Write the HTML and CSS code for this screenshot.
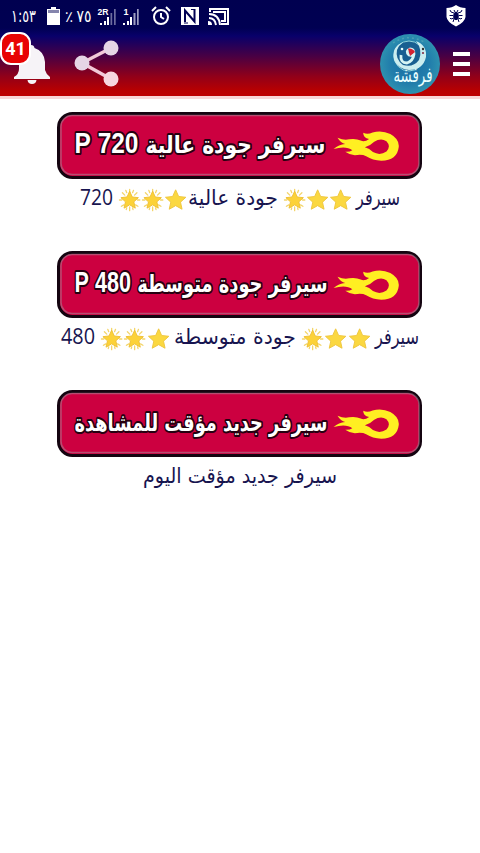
FILE: index.html
```
<!DOCTYPE html>
<html lang="ar">
<head>
    <meta charset="UTF-8">
    <meta name="viewport" content="width=device-width, initial-scale=1.0">
    <title>فرفشة</title>
    <link rel="stylesheet" href="styles.css">
</head>
<body>
    <svg class="defs" width="0" height="0">
        <symbol id="flame" viewBox="276 74 208 98">
            <path fill-rule="evenodd" d="M278 132 Q294 119 314 117 Q300 113 290 97 Q310 106 326 102 Q348 99 362 106 Q374 112 388 101 Q369 98 370 82 Q383 88 399 81 Q428 73 454 86 Q483 102 480 127 Q475 168 426 169 Q399 168 379 155 Q366 148 344 152 Q326 150 314 141 Q328 142 336 136 Q317 121 278 132 Z M375 127 Q391 123 404 110 Q424 97 442 108 Q457 124 442 140 Q422 154 400 142 Q389 131 375 127 Z"/>
        </symbol>
        <symbol id="star" viewBox="0 0 24 24">
            <path d="M12 1.5 L15.1 8.4 L22.5 9.2 L17 14.2 L18.6 21.5 L12 17.8 L5.4 21.5 L7 14.2 L1.5 9.2 L8.9 8.4 Z" fill="#fbd840" stroke="#eec640" stroke-width="1" stroke-linejoin="round"/>
        </symbol>
        <symbol id="glow" viewBox="0 0 24 24">
            <path d="M12 1V5M12 19V23M1.5 12H4M20 12H22.5M4.5 4.5L7 7M19.5 4.5L17 7M3.5 18.5L6 17M20.5 18.5L18 17M8 2L9 4.5M16 2L15 4.5M8.5 22L9 20M15.5 22L15 20" stroke="#f3d56a" stroke-width="1.3" stroke-linecap="round"/>
            <path d="M12 3 L14.7 8.9 L21 9.6 L16.3 13.9 L17.8 20.4 L12 17 L6.2 20.4 L7.7 13.9 L3 9.6 L9.3 8.9 Z" fill="#fcd238" stroke="#eec035" stroke-width="1" stroke-linejoin="round"/>
        </symbol>
    </svg>

    <div class="header">
        <div class="status">
            <svg class="clock" width="27" height="26"><text x="13.5" y="19" textLength="25" lengthAdjust="spacingAndGlyphs">١:٥٣</text></svg>
            <svg class="battery" width="13" height="18"><path fill="#fff" d="M4 0H9V2H13V18H0V2H4Z"/><path fill="#8585ad" d="M1 3H12V6H1Z"/></svg>
            <svg class="percent" width="27" height="26"><text x="4" y="19" class="sign">٪</text><text x="19" y="19" textLength="15" lengthAdjust="spacingAndGlyphs">٧٥</text></svg>
            <svg class="signal" width="18" height="19">
                <text x="5" y="8" class="sim" textLength="11" lengthAdjust="spacingAndGlyphs">2R</text>
                <path fill="#fff" d="M2 16h2v2h-2zM6 14h2v4h-2zM9 10h2v8h-2z"/><path fill="#6c6c9e" d="M12.5 6h1.7v12h-1.7zM16 2h1.7v16h-1.7z"/>
            </svg>
            <svg class="signal signal-two" width="16" height="19">
                <text x="3" y="8" class="sim">1</text>
                <path fill="#fff" d="M0 16h2v2h-2zM4 14h2v4h-2zM7 10h2v8h-2z"/><path fill="#9d9dc0" d="M10.5 6h2v12h-2zM14 2h1.7v16h-1.7z"/>
            </svg>
            <svg class="alarm" width="20" height="20" viewBox="0 0 20 20" fill="none" stroke="#fff" stroke-width="2"><circle cx="10" cy="11" r="7"/><path d="M10 7V11L13 13M1 5L5 1M19 5L15 1"/></svg>
            <svg class="nfc" width="18" height="18"><path fill="#fff" d="M0 0H18V18H0Z"/><path d="M4 15V3.5L13.5 14.5V3" fill="none" stroke="#000052" stroke-width="2"/><path d="M7 16H3M14.5 2.5H10" stroke="#000052" stroke-width="1.2"/></svg>
            <svg class="cast" width="22" height="19" viewBox="0 0 22 19" fill="none" stroke="#fff" stroke-width="2"><path d="M2 5V2H20V17H13M5 5H17V14H13M1 7Q11 7 12 18M1 11Q7 11 8 18"/><path fill="#fff" stroke="none" d="M0 14Q4 14 4 18H0Z"/></svg>
            <svg class="shield" width="20" height="22" viewBox="0 0 20 22">
                <path fill="#fff" d="M10 0Q14 3 19.5 3V12Q19 17 10 21.5Q1 17 .5 12V3Q6 3 10 0Z"/>
                <g stroke="#000052" fill="none" stroke-width="1"><ellipse cx="10" cy="11" rx="2.3" ry="3.8" fill="#000052"/><path d="M8 8L5 7L4 5M12 8L15 7L16 5M7 10.5H3.5M13 10.5H16.5M8 13L5 14L4 13M12 13L15 14L16 13M8 14L7 17M12 14L13 17M9 7L8 5M11 7L12 5"/></g>
            </svg>
        </div>
        <div class="toolbar">
            <div class="notify">
                <svg class="bell" width="36" height="42" viewBox="0 0 36 42"><path fill="#f6f3f7" d="M17 2Q20 2 20.5 5Q30 8 31 19V27Q32 31 36 34V36H0V34Q5 31 5 26V18Q6 8 14 5Q14 2 17 2ZM13.5 37H22.5Q22 41 18 41Q14 41 13.5 37Z"/></svg>
                <span class="badge">41</span>
            </div>
            <svg class="share" width="46" height="48" viewBox="0 0 46 48"><path d="M37 8L8 23L37 39" fill="none" stroke="#f2c9d8" stroke-width="3.4"/><g fill="#e5d5e5"><circle cx="37" cy="8" r="7.5"/><circle cx="8" cy="23" r="7.5"/><circle cx="37" cy="39" r="7.5" fill="#f6d6de"/></g></svg>
            <svg class="logo" width="62" height="62" viewBox="0 0 62 62">
                <defs><radialGradient id="sea"><stop offset="0" stop-color="#176da3"/><stop offset=".65" stop-color="#217dab"/><stop offset="1" stop-color="#2d91b0"/></radialGradient></defs>
                <circle cx="31" cy="31" r="30" fill="url(#sea)"/>
                <path d="M14 10Q29 0 45 9" fill="none" stroke="#4a9fb4" stroke-width="1.5" stroke-dasharray="2 3"/>
                <circle cx="30" cy="23" r="15" fill="#185f91" stroke="#8ed3db" stroke-width="1"/>
                <path d="M24 9Q12 14 15 27Q19 36 30 37Q44 37 47 24Q48 12 37 8Q44 17 40 27Q34 35 24 32Q16 26 18 17Q20 12 24 9Z" fill="#cbedef"/>
                <path d="M22 22Q21 30 28 30Q34 28 35 21Q35 16 31 16Q26 18 30 22L35 23" fill="none" stroke="#d6f5f4" stroke-width="2.8"/>
                <path d="M29 15.5Q34 15 36 19L31 23Z" fill="#d52232"/><circle cx="23" cy="16" r="1.3" fill="#e4ffff"/><circle cx="44" cy="16" r="1.2" fill="#333"/><circle cx="44" cy="20" r="1.1" fill="#843047"/>
                <text x="34" y="49" class="logo-text" textLength="39" lengthAdjust="spacingAndGlyphs">فرفشة</text>
            </svg>
            <div class="menu"><span></span><span></span><span></span></div>
        </div>
    </div>

    <div class="content">
        <div class="server">
            <svg class="banner" width="365" height="67">
                <rect class="banner-edge" x="1.5" y="1.5" width="362" height="64" rx="14"/>
                <rect class="banner-shine" x="4" y="3.5" width="358" height="59" rx="11"/>
                <text class="banner-text" x="143" y="41" textLength="251" lengthAdjust="spacingAndGlyphs">سيرفر جودة عالية <tspan class="quality">720 P</tspan></text>
                <use class="flame" href="#flame" x="276" y="18" width="67" height="32"/>
            </svg>
            <div class="caption">
                <svg class="word" width="44" height="34"><text x="22" y="22" textLength="44" lengthAdjust="spacingAndGlyphs">سيرفر</text></svg>
                <span class="stars"><svg><use href="#star"/></svg><svg><use href="#star"/></svg><svg><use href="#glow"/></svg></span>
                <svg class="word" width="90" height="34"><text x="45" y="22" textLength="90" lengthAdjust="spacingAndGlyphs">جودة عالية</text></svg>
                <span class="stars tight"><svg><use href="#star"/></svg><svg><use href="#glow"/></svg><svg><use href="#glow"/></svg></span>
                <svg class="word" width="33" height="34"><text class="num" x="16.5" y="22" textLength="33" lengthAdjust="spacingAndGlyphs">720</text></svg>
            </div>
        </div>
        <div class="server">
            <svg class="banner" width="365" height="67">
                <rect class="banner-edge" x="1.5" y="1.5" width="362" height="64" rx="14"/>
                <rect class="banner-shine" x="4" y="3.5" width="358" height="59" rx="11"/>
                <text class="banner-text" x="144" y="41" textLength="253" lengthAdjust="spacingAndGlyphs">سيرفر جودة متوسطة <tspan class="quality">480 P</tspan></text>
                <use class="flame" href="#flame" x="276" y="18" width="67" height="32"/>
            </svg>
            <div class="caption">
                <svg class="word" width="44" height="34"><text x="22" y="22" textLength="44" lengthAdjust="spacingAndGlyphs">سيرفر</text></svg>
                <span class="stars"><svg><use href="#star"/></svg><svg><use href="#star"/></svg><svg><use href="#glow"/></svg></span>
                <svg class="word" width="122" height="34"><text x="61" y="22" textLength="122" lengthAdjust="spacingAndGlyphs">جودة متوسطة</text></svg>
                <span class="stars"><svg><use href="#star"/></svg><svg><use href="#glow"/></svg><svg><use href="#glow"/></svg></span>
                <svg class="word" width="34" height="34"><text class="num" x="17" y="22" textLength="34" lengthAdjust="spacingAndGlyphs">480</text></svg>
            </div>
        </div>
        <div class="server">
            <svg class="banner" width="365" height="67">
                <rect class="banner-edge" x="1.5" y="1.5" width="362" height="64" rx="14"/>
                <rect class="banner-shine" x="4" y="3.5" width="358" height="59" rx="11"/>
                <text class="banner-text" x="144" y="41" textLength="253" lengthAdjust="spacingAndGlyphs">سيرفر جديد مؤقت للمشاهدة</text>
                <use class="flame" href="#flame" x="276" y="18" width="67" height="32"/>
            </svg>
            <div class="caption">
                <svg class="word" width="194" height="34"><text x="97" y="22" textLength="194" lengthAdjust="spacingAndGlyphs">سيرفر جديد مؤقت اليوم</text></svg>
            </div>
        </div>
    </div>
</body>
</html>
```

FILE: styles.css
```
body {
    margin: 0;
    background-color: #fff;
    font-family: "DejaVu Sans", sans-serif;
}
svg {
    display: block;
    flex: none;
    overflow: visible;
}
.defs {
    position: absolute;
}
text {
    direction: rtl;
    text-anchor: middle;
}

/* Header */
.header {
    height: 96px;
    background: linear-gradient(#000050 0, #000052 28px, #08006a 36px, #480044 56px, #930018 77px, #b90000 91px, #bd0000 96px);
    border-bottom: 3px solid #f8d5d5;
}
.status {
    display: flex;
    align-items: center;
    height: 32px;
    padding: 0 14px 0 10px;
}
.status text {
    fill: #fff;
    font-size: 17px;
}
.status .sign {
    font-size: 15px;
}
.status .sim {
    font: bold 9px "Liberation Sans", sans-serif;
    direction: ltr;
}
.battery {
    margin-left: 10px;
}
.percent {
    margin-left: 5px;
}
.signal {
    margin-left: 6px;
}
.signal-two {
    margin-left: 7px;
}
.alarm {
    margin-left: 12px;
}
.nfc {
    margin-left: 10px;
}
.cast {
    margin-left: 9px;
}
.shield {
    margin-left: auto;
}
.toolbar {
    display: flex;
    align-items: center;
    height: 64px;
    padding-right: 10px;
}
.notify {
    position: relative;
    width: 50px;
}
.bell {
    margin-left: 14px;
}
.badge {
    position: absolute;
    left: 0;
    top: -11px;
    box-sizing: border-box;
    width: 31px;
    height: 33px;
    border: 2px solid #fff;
    border-radius: 11px;
    background-color: #e80404;
    color: #fff;
    font: bold 18px/29px Roboto, sans-serif;
    text-align: center;
}
.share {
    margin-left: 24px;
}
.logo {
    margin-left: auto;
}
.logo-text {
    fill: #eaffff;
    font-size: 20px;
}
.menu {
    display: flex;
    flex-direction: column;
    gap: 6px;
    margin-left: 12px;
}
.menu span {
    width: 17px;
    height: 4px;
    background-color: #fff;
}

/* Servers */
.content {
    padding-top: 13px;
}
.server {
    height: 139px;
}
.banner {
    margin: 0 58px 0 57px;
}
.banner-edge {
    fill: #cc0040;
    stroke: #140410;
    stroke-width: 3;
}
.banner-shine {
    fill: none;
    stroke: #a87f93;
    stroke-width: 1.5;
    stroke-opacity: .6;
}
.banner-text {
    font-size: 24px;
    font-weight: bold;
    fill: #fff;
    stroke: #260010;
    stroke-width: 4;
    stroke-linejoin: round;
    paint-order: stroke;
}
.quality {
    font-family: "Liberation Sans", sans-serif;
    font-size: 29px;
}
.flame {
    fill: #ffef22;
}
.caption {
    display: flex;
    direction: rtl;
    justify-content: center;
    align-items: center;
    gap: 4px;
    height: 42px;
}
.word text {
    fill: #17144f;
    font-size: 21px;
}
.word .num {
    font-family: "Open Sans", sans-serif;
    font-size: 22px;
}
.stars {
    display: flex;
    margin-left: 1px;
}
.tight {
    margin-right: -4px;
}
.stars svg {
    width: 23.3px;
    height: 24px;
}
```
